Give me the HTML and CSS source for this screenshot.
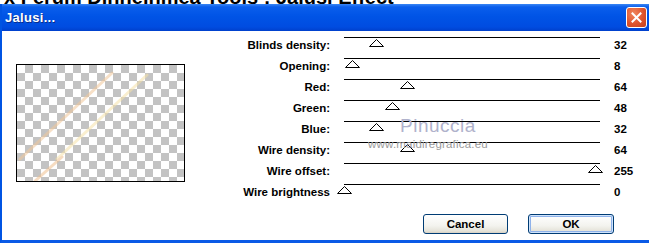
FILE: index.html
```html
<!DOCTYPE html>
<html lang="en">
<head>
    <meta charset="UTF-8">
    <meta name="viewport" content="width=device-width, initial-scale=1.0">
    <title>Jalusi</title>
    <link rel="stylesheet" href="styles.css">
</head>
<body>
    <div class="topstrip"><span>x Ferum Dinneinmea Tools ; Jalusi Effect</span></div>
    <div class="window">
        <div class="titlebar">
            <span class="title">Jalusi...</span>
            <button class="close">
                <svg width="11" height="11" viewBox="0 0 11 11">
                    <path d="M1.5 1.5 L9.5 9.5 M9.5 1.5 L1.5 9.5" stroke="#fff" stroke-width="2" stroke-linecap="square"/>
                </svg>
            </button>
        </div>
        <div class="content">
            <div class="preview">
                <svg width="167" height="116" viewBox="0 0 167 116">
                    <g stroke-width="3" stroke-linecap="round" fill="none" opacity="0.55">
                        <path d="M3 94 L95 8" stroke="#f2c89a"/>
                        <path d="M40 94 L130 10" stroke="#f6e2a8"/>
                        <path d="M18 116 L45 92" stroke="#f0c090"/>
                    </g>
                </svg>
            </div>
            <div class="controls">
                <div class="sliders">
                    <span class="label">Blinds density:</span>
                    <div class="track"><span class="thumb" style="left: 25px"><svg width="15" height="8"><polygon points="0.5,7.5 7.5,0.5 14.5,7.5" fill="#fff" stroke="#000"/></svg></span></div>
                    <span class="value">32</span>

                    <span class="label">Opening:</span>
                    <div class="track"><span class="thumb" style="left: 1px"><svg width="15" height="8"><polygon points="0.5,7.5 7.5,0.5 14.5,7.5" fill="#fff" stroke="#000"/></svg></span></div>
                    <span class="value">8</span>

                    <span class="label">Red:</span>
                    <div class="track"><span class="thumb" style="left: 56px"><svg width="15" height="8"><polygon points="0.5,7.5 7.5,0.5 14.5,7.5" fill="#fff" stroke="#000"/></svg></span></div>
                    <span class="value">64</span>

                    <span class="label">Green:</span>
                    <div class="track"><span class="thumb" style="left: 41px"><svg width="15" height="8"><polygon points="0.5,7.5 7.5,0.5 14.5,7.5" fill="#fff" stroke="#000"/></svg></span></div>
                    <span class="value">48</span>

                    <span class="label">Blue:</span>
                    <div class="track"><span class="thumb" style="left: 25px"><svg width="15" height="8"><polygon points="0.5,7.5 7.5,0.5 14.5,7.5" fill="#fff" stroke="#000"/></svg></span></div>
                    <span class="value">32</span>

                    <span class="label">Wire density:</span>
                    <div class="track"><span class="thumb" style="left: 56px"><svg width="15" height="8"><polygon points="0.5,7.5 7.5,0.5 14.5,7.5" fill="#fff" stroke="#000"/></svg></span></div>
                    <span class="value">64</span>

                    <span class="label">Wire offset:</span>
                    <div class="track"><span class="thumb" style="left: 244px"><svg width="15" height="8"><polygon points="0.5,7.5 7.5,0.5 14.5,7.5" fill="#fff" stroke="#000"/></svg></span></div>
                    <span class="value">255</span>

                    <span class="label">Wire brightness</span>
                    <div class="track"><span class="thumb" style="left: -7px"><svg width="15" height="8"><polygon points="0.5,7.5 7.5,0.5 14.5,7.5" fill="#fff" stroke="#000"/></svg></span></div>
                    <span class="value">0</span>
                </div>
                <div class="buttons">
                    <button class="btn cancel">Cancel</button>
                    <button class="btn ok">OK</button>
                </div>
            </div>
        </div>
        <div class="watermark">
            <div class="wm-name">Pinuccia</div>
            <div class="wm-site">www.maidiregrafica.eu</div>
        </div>
    </div>
</body>
</html>
```

FILE: styles.css
```css
body {
    margin: 0;
    background-color: #fff;
    font-family: "Liberation Sans", Arial, sans-serif;
    width: 649px;
    height: 243px;
    overflow: hidden;
}
.topstrip {
    height: 4px;
    overflow: hidden;
    padding-left: 4px;
}
.topstrip span {
    display: block;
    margin-top: -13px;
    font-size: 20px;
    line-height: 20px;
    font-weight: bold;
    color: #000;
    white-space: nowrap;
}
.window {
    position: relative;
    height: 236px;
    border-left: 2px solid #0054e3;
    border-bottom: 3px solid #0a5ae6;
    background-color: #fff;
}
.titlebar {
    height: 27px;
    display: flex;
    align-items: center;
    justify-content: space-between;
    padding: 0 2px 0 3px;
    background: linear-gradient(#3a86f4 0, #0a5eec 3px, #0054e6 45%, #004ce0 85%, #0040cc 100%);
}
.titlebar .title {
    color: #fff;
    font-weight: bold;
    font-size: 13px;
    letter-spacing: 0.3px;
    text-shadow: 1px 1px 0 #0a2d8c;
}
.titlebar .close {
    width: 21px;
    height: 21px;
    padding: 0;
    border: 1px solid #fff;
    border-radius: 3px;
    background: radial-gradient(circle at 35% 30%, #f0875e, #e0532c 55%, #c0401e);
    display: flex;
    align-items: center;
    justify-content: center;
}
.content {
    display: flex;
    padding: 6px 0 0 14px;
    gap: 5px;
}
.preview {
    box-sizing: border-box;
    width: 169px;
    height: 118px;
    margin-top: 27px;
    border: 1px solid #000;
    background: conic-gradient(#c3c3c3 25%, #fff 0 50%, #c3c3c3 0 75%, #fff 0) 0 0 / 16px 16px;
}
.preview svg {
    display: block;
}
.sliders {
    display: grid;
    grid-template-columns: 140px 256px 35px;
    grid-auto-rows: 21px;
    column-gap: 14px;
    font-size: 11.5px;
    font-weight: bold;
    color: #000;
}
.sliders .label {
    text-align: right;
    line-height: 13px;
    padding-top: 2px;
    white-space: nowrap;
}
.sliders .value {
    line-height: 13px;
    padding-top: 2px;
}
.track {
    position: relative;
    border-top: 1px solid #000;
}
.track .thumb {
    position: absolute;
    top: 1px;
    width: 15px;
    height: 8px;
}
.track .thumb svg {
    display: block;
}
.buttons {
    display: flex;
    justify-content: flex-end;
    gap: 20px;
    margin-top: 9px;
    padding-right: 35px;
}
.btn {
    height: 20px;
    padding: 0;
    border: 1px solid #003c74;
    border-radius: 3px;
    background: linear-gradient(#ffffff, #f3f3ee 60%, #e4e2d8 90%, #d6d0c2);
    font-family: "Liberation Sans", Arial, sans-serif;
    font-size: 11.5px;
    font-weight: bold;
    color: #000;
}
.btn.cancel {
    width: 85px;
}
.btn.ok {
    width: 86px;
    box-shadow: inset 0 0 0 1px #cfe3fb, inset 0 0 0 2px #8fb2ea;
}
.watermark {
    position: absolute;
    left: 366px;
    top: 112px;
    pointer-events: none;
}
.wm-name {
    margin-left: 32px;
    font-size: 19px;
    line-height: 20px;
    color: #b0b2cc;
    letter-spacing: 0.5px;
}
.wm-site {
    margin-top: 2px;
    font-size: 11.5px;
    line-height: 13px;
    letter-spacing: 0.2px;
    color: #9a9a9a;
}
```
